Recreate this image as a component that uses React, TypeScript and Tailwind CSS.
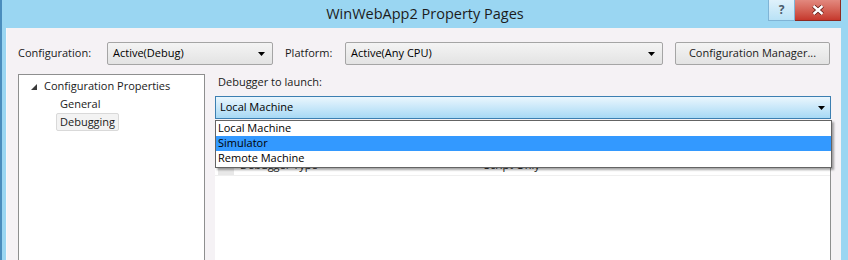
import React from "react"

const font = { fontFamily: '"Open Sans", "Noto Sans", sans-serif' }

function Arrow() {
  return (
    <svg width="7" height="4" viewBox="0 0 7 4" className="shrink-0">
      <path d="M0 0H7L3.5 4Z" fill="#000" />
    </svg>
  )
}

function Combo({ value, className }: { value: string; className: string }) {
  return (
    <div
      className={`flex h-[23px] items-center justify-between rounded-[2px] border border-[#a5a5a5] bg-gradient-to-b from-[#f4f4f4] to-[#e3e3e3] pl-[5px] pr-[7px] text-[#000] ${className}`}
    >
      <span>{value}</span>
      <Arrow />
    </div>
  )
}

export default function App() {
  const items = ["Local Machine", "Simulator", "Remote Machine"]

  return (
    <div
      className="flex h-[260px] w-[848px] flex-col overflow-hidden bg-[#9ad6f2] text-[11px] text-[#1a1a1a]"
      style={font}
    >
      {/* title bar */}
      <div className="relative flex h-[28px] shrink-0 items-center justify-center border-l-2 border-[#4a8dbd]">
        <span className="text-[14.5px] text-[#1c1c1c]">WinWebApp2 Property Pages</span>
        <div className="absolute right-[7px] top-0 flex h-[21px]">
          <div className="flex w-[27px] items-center justify-center border border-t-0 border-[#7fb4d6] bg-gradient-to-b from-[#dff1fb] to-[#b9e2f6] text-[12px] font-bold text-[#4a5a6a]">
            ?
          </div>
          <div className="flex w-[46px] items-center justify-center border border-t-0 border-l-0 border-[#8c2a22] bg-gradient-to-b from-[#e2887e] to-[#c5372c]">
            <svg width="12" height="10" viewBox="0 0 12 10">
              <path d="M1.5 1L10.5 9M10.5 1L1.5 9" stroke="#5a1510" strokeWidth="4" />
              <path d="M1.5 1L10.5 9M10.5 1L1.5 9" stroke="#fff" strokeWidth="2.4" />
            </svg>
          </div>
        </div>
      </div>

      {/* client area */}
      <div className="flex flex-1 border-l-2 border-[#4a8dbd] pl-[4px] pr-[7px]">
        <div className="relative flex flex-1 flex-col border-l border-[#f8f8fb] bg-[#f5f2f5]">
          {/* top row */}
          <div className="mt-[14px] flex items-center">
            <span className="ml-[11px] w-[89px]">Configuration:</span>
            <Combo value="Active(Debug)" className="w-[166px]" />
            <span className="ml-[12px] w-[60px]">Platform:</span>
            <Combo value="Active(Any CPU)" className="w-[318px]" />
            <div className="ml-[12px] flex h-[23px] w-[155px] items-center justify-center rounded-[2px] border border-[#a5a5a5] bg-gradient-to-b from-[#f4f4f4] to-[#e3e3e3]">
              Configuration Manager...
            </div>
          </div>

          {/* panels */}
          <div className="mt-[9px] flex flex-1">
            {/* tree */}
            <div className="ml-[11px] w-[187px] border border-b-0 border-[#8e8f8f] bg-white pl-[12px] pt-[2px]">
              <div className="flex h-[18px] items-center">
                <svg width="6" height="6" viewBox="0 0 6 6" className="mr-[7px] mt-[1px]">
                  <path d="M6 0V6H0Z" fill="#3a3a3a" />
                </svg>
                <span>Configuration Properties</span>
              </div>
              <div className="ml-[29px] flex h-[18px] items-center">General</div>
              <div className="ml-[25px] flex h-[18px] w-fit items-center rounded-[2px] border border-[#d9d9d9] bg-[#f3f3f3] px-[3px]">
                Debugging
              </div>
            </div>

            {/* right side */}
            <div className="ml-[10px] mr-[10px] flex flex-1 flex-col">
              <div className="ml-[3px] mt-[0px] h-[22px]">Debugger to launch:</div>
              <div className="flex h-[23px] items-center justify-between border border-[#3c7fb1] bg-gradient-to-b from-[#eaf6fd] to-[#a7d9f5] pl-[4px] pr-[5px] text-[#000]">
                <span>Local Machine</span>
                <Arrow />
              </div>
              {/* property grid behind the drop list */}
              <div className="mt-[4px] flex flex-1 flex-col border-r border-[#8e8f8f] bg-white">
                <div className="h-[33px]" />
                <div className="flex h-[20px] items-center border-b border-[#efefef]">
                  <div className="ml-[3px] h-full w-[16px] bg-[#e8e8e8]" />
                  <span className="ml-[6px] w-[244px]">Debugger Type</span>
                  <span>Script Only</span>
                </div>
              </div>
            </div>
          </div>

          {/* open drop list */}
          <div className="absolute left-[208px] top-[92px] w-[617px] border border-[#646464] bg-white pb-[1px] text-[#000] shadow-[2px_2px_2px_rgba(0,0,0,0.35)]">
            {items.map((item) => (
              <div
                key={item}
                className={`flex h-[15px] items-center pl-[2px] ${item === "Simulator" ? "bg-[#3399ff]" : ""}`}
              >
                {item}
              </div>
            ))}
          </div>
        </div>
      </div>
    </div>
  )
}
